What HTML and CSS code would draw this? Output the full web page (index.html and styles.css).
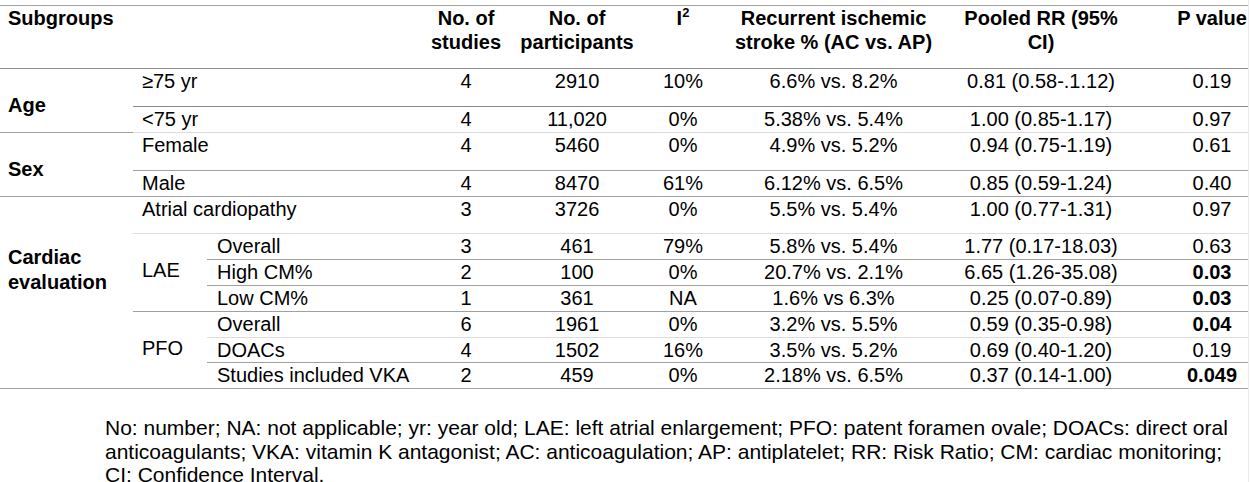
FILE: index.html
```html
<!DOCTYPE html>
<html lang="en">
<head>
<meta charset="utf-8">
<title>Subgroup analysis</title>
<link rel="stylesheet" href="styles.css">
</head>
<body>
<div class="page">
  <table class="subgroups">
    <colgroup>
      <col class="c-group">
      <col class="c-sub">
      <col class="c-subsub">
      <col class="c-studies">
      <col class="c-part">
      <col class="c-i2">
      <col class="c-rec">
      <col class="c-rr">
      <col class="c-p">
    </colgroup>
    <thead>
      <tr class="h-head">
        <th colspan="3" class="lab">Subgroups</th>
        <th>No. of<br>studies</th>
        <th>No. of<br>participants</th>
        <th>I<sup>2</sup></th>
        <th>Recurrent ischemic<br>stroke % (AC vs. AP)</th>
        <th>Pooled RR (95%<br>CI)</th>
        <th class="pcol">P value</th>
      </tr>
    </thead>
    <tbody>
      <tr class="h-tall">
        <td rowspan="2" class="grp b-mid">Age</td>
        <td colspan="2" class="sub b-dark">≥75 yr</td>
        <td class="b-dark">4</td><td class="b-dark">2910</td><td class="b-dark">10%</td>
        <td class="b-dark">6.6% vs. 8.2%</td><td class="b-dark">0.81 (0.58-.1.12)</td><td class="pcol b-dark">0.19</td>
      </tr>
      <tr class="h-row">
        <td colspan="2" class="sub b-light">&lt;75 yr</td>
        <td class="b-light">4</td><td class="b-light">11,020</td><td class="b-light">0%</td>
        <td class="b-light">5.38% vs. 5.4%</td><td class="b-light">1.00 (0.85-1.17)</td><td class="pcol b-light">0.97</td>
      </tr>
      <tr class="h-tall">
        <td rowspan="2" class="grp b-mid">Sex</td>
        <td colspan="2" class="sub b-mid">Female</td>
        <td class="b-mid">4</td><td class="b-mid">5460</td><td class="b-mid">0%</td>
        <td class="b-mid">4.9% vs. 5.2%</td><td class="b-mid">0.94 (0.75-1.19)</td><td class="pcol b-mid">0.61</td>
      </tr>
      <tr class="h-row">
        <td colspan="2" class="sub b-mid">Male</td>
        <td class="b-mid">4</td><td class="b-mid">8470</td><td class="b-mid">61%</td>
        <td class="b-mid">6.12% vs. 6.5%</td><td class="b-mid">0.85 (0.59-1.24)</td><td class="pcol b-mid">0.40</td>
      </tr>
      <tr class="h-mid">
        <td rowspan="7" class="grp grp-tall b-mid">Cardiac<br>evaluation</td>
        <td colspan="2" class="sub b-light">Atrial cardiopathy</td>
        <td class="b-light">3</td><td class="b-light">3726</td><td class="b-light">0%</td>
        <td class="b-light">5.5% vs. 5.4%</td><td class="b-light">1.00 (0.77-1.31)</td><td class="pcol b-light">0.97</td>
      </tr>
      <tr class="h-row">
        <td rowspan="3" class="grp sub b-mid">LAE</td>
        <td class="subsub b-mid">Overall</td>
        <td class="b-mid">3</td><td class="b-mid">461</td><td class="b-mid">79%</td>
        <td class="b-mid">5.8% vs. 5.4%</td><td class="b-mid">1.77 (0.17-18.03)</td><td class="pcol b-mid">0.63</td>
      </tr>
      <tr class="h-row">
        <td class="subsub b-mid">High CM%</td>
        <td class="b-mid">2</td><td class="b-mid">100</td><td class="b-mid">0%</td>
        <td class="b-mid">20.7% vs. 2.1%</td><td class="b-mid">6.65 (1.26-35.08)</td><td class="pcol b-mid"><b>0.03</b></td>
      </tr>
      <tr class="h-row">
        <td class="subsub b-mid">Low CM%</td>
        <td class="b-mid">1</td><td class="b-mid">361</td><td class="b-mid">NA</td>
        <td class="b-mid">1.6% vs 6.3%</td><td class="b-mid">0.25 (0.07-0.89)</td><td class="pcol b-mid"><b>0.03</b></td>
      </tr>
      <tr class="h-row">
        <td rowspan="3" class="grp sub b-mid">PFO</td>
        <td class="subsub b-light">Overall</td>
        <td class="b-light">6</td><td class="b-light">1961</td><td class="b-light">0%</td>
        <td class="b-light">3.2% vs. 5.5%</td><td class="b-light">0.59 (0.35-0.98)</td><td class="pcol b-light"><b>0.04</b></td>
      </tr>
      <tr class="h-short">
        <td class="subsub b-mid">DOACs</td>
        <td class="b-mid">4</td><td class="b-mid">1502</td><td class="b-mid">16%</td>
        <td class="b-mid">3.5% vs. 5.2%</td><td class="b-mid">0.69 (0.40-1.20)</td><td class="pcol b-mid">0.19</td>
      </tr>
      <tr class="h-row">
        <td class="subsub b-mid">Studies included VKA</td>
        <td class="b-mid">2</td><td class="b-mid">459</td><td class="b-mid">0%</td>
        <td class="b-mid">2.18% vs. 6.5%</td><td class="b-mid">0.37 (0.14-1.00)</td><td class="pcol b-mid"><b>0.049</b></td>
      </tr>
    </tbody>
  </table>
  <p class="note">No: number; NA: not applicable; yr: year old; LAE: left atrial enlargement; PFO: patent foramen ovale; DOACs: direct oral anticoagulants; VKA: vitamin K antagonist; AC: anticoagulation; AP: antiplatelet; RR: Risk Ratio; CM: cardiac monitoring; CI: Confidence Interval.</p>
</div>
</body>
</html>
```

FILE: styles.css
```css
html, body {
  margin: 0;
  padding: 0;
  background: #ffffff;
}

body {
  font-family: "Liberation Sans", Arial, sans-serif;
  font-size: 20px;
  color: #000000;
}

.page {
  width: 1249px;
  min-height: 482px;
  border-right: 1px solid #ececec;
  padding-top: 5px;
  box-sizing: border-box;
}

.subgroups {
  width: 1248px;
  table-layout: fixed;
  border-collapse: separate;
  border-spacing: 0;
  border-top: 1px solid #a3a3a3;
}

.c-group { width: 133px; }
.c-sub { width: 74px; }
.c-subsub { width: 218px; }
.c-studies { width: 82px; }
.c-part { width: 140px; }
.c-i2 { width: 72px; }
.c-rec { width: 229px; }
.c-rr { width: 186px; }
.c-p { width: 114px; }

.subgroups th,
.subgroups td {
  padding: 0;
  line-height: 24px;
  vertical-align: top;
  text-align: center;
  white-space: nowrap;
}

.subgroups th {
  font-weight: bold;
  border-bottom: 1px solid #8f8f8f;
}

.subgroups th.lab {
  text-align: left;
  padding-left: 8px;
}

.subgroups .pcol {
  padding-left: 42px;
}

.subgroups sup {
  font-size: 13px;
  line-height: 0;
  vertical-align: 8px;
}

.h-head { height: 63px; }
.h-tall { height: 38px; }
.h-mid { height: 37px; }
.h-row { height: 26px; }
.h-short { height: 25px; }

.subgroups td.grp {
  text-align: left;
  font-weight: bold;
  padding-left: 8px;
  padding-top: 24px;
}

.subgroups td.grp-tall {
  padding-top: 48px;
  line-height: 25px;
}

.subgroups td.sub {
  text-align: left;
  padding-left: 9px;
}

.subgroups td.grp.sub {
  font-weight: normal;
}

.subgroups td.subsub {
  text-align: left;
  padding-left: 10px;
}

.b-dark { border-bottom: 1px solid #8a8a8a; }
.b-mid { border-bottom: 1px solid #a0a0a0; }
.b-light { border-bottom: 1px solid #dcdcdc; }

.note {
  margin: 27px 0 0 0;
  padding-left: 105px;
  width: 1140px;
  font-size: 21px;
  line-height: 23.5px;
}
```
